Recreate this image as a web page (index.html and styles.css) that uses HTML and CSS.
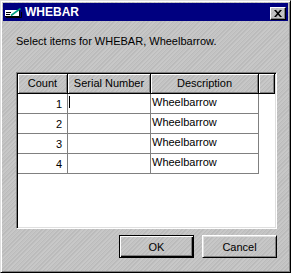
FILE: index.html
```html
<!DOCTYPE html>
<html>
<head>
<meta charset="utf-8">
<link rel="stylesheet" href="styles.css">
</head>
<body>
<div class="window">
  <div class="titlebar">
    <svg class="appicon" width="17" height="10" viewBox="0 0 17 10">
      <path d="M1 9.5h15.5V4" fill="none" stroke="#000"/>
      <path d="M0 2h14v7H0z" fill="#fff"/>
      <path d="M0 8.5h14.5V2" fill="none" stroke="#000"/>
      <path d="M1 4.5h5M1 6.5h4" stroke="#000"/>
      <path d="M6 7.5L15.5 0.5" stroke="#00a080" stroke-width="1.6"/>
    </svg>
    <span class="title">WHEBAR</span>
    <button class="close" type="button">
      <svg width="8" height="7" viewBox="0 0 8 7"><path d="M0 0h2l2 2.2L6 0h2L5 3.5 8 7H6L4 4.8 2 7H0l3-3.5z" fill="#000"/></svg>
    </button>
  </div>
  <div class="content">
    <p class="prompt">Select items for WHEBAR, Wheelbarrow.</p>
    <div class="grid">
      <div class="hdr">Count</div>
      <div class="hdr">Serial Number</div>
      <div class="hdr">Description</div>
      <div class="hdr"></div>

      <div class="cell num">1</div>
      <div class="cell"><span class="caret"></span></div>
      <div class="cell desc">Wheelbarrow</div>
      <div class="blank"></div>

      <div class="cell num">2</div>
      <div class="cell"></div>
      <div class="cell desc">Wheelbarrow</div>
      <div class="blank"></div>

      <div class="cell num">3</div>
      <div class="cell"></div>
      <div class="cell desc">Wheelbarrow</div>
      <div class="blank"></div>

      <div class="cell num">4</div>
      <div class="cell"></div>
      <div class="cell desc">Wheelbarrow</div>
      <div class="blank"></div>
    </div>
    <div class="buttons">
      <button class="btn default" type="button">OK</button>
      <button class="btn" type="button">Cancel</button>
    </div>
  </div>
</div>
</body>
</html>
```
FILE: styles.css
```css
html, body {
  margin: 0;
  padding: 0;
}
body {
  width: 291px;
  height: 273px;
  font-family: "Liberation Sans", Arial, sans-serif;
  font-size: 11px;
  color: #000;
  --hatch: repeating-linear-gradient(135deg, #c8c8c8 0 1px, #bbbbbb 1px 2px, #c3c3c3 2px 3px);
}
.window {
  box-sizing: border-box;
  width: 291px;
  height: 273px;
  border: 1px solid;
  border-color: #dfdfdf #000 #000 #dfdfdf;
  box-shadow: inset 1px 1px #fff, inset -1px -1px #808080;
  padding: 2px;
  background: var(--hatch);
  display: flex;
  flex-direction: column;
}
.titlebar {
  height: 18px;
  background: #000080;
  display: flex;
  align-items: flex-start;
  flex-shrink: 0;
}
.appicon {
  display: block;
  margin: 5px 0 0 2px;
}
.title {
  margin-left: 3px;
  color: #fff;
  font-weight: bold;
  font-size: 12px;
  line-height: 18px;
}
.close {
  margin: 4px 2px 0 auto;
  box-sizing: border-box;
  width: 16px;
  height: 13px;
  padding: 0;
  border: 1px solid;
  border-color: #fff #000 #000 #fff;
  box-shadow: inset -1px -1px #808080;
  background: var(--hatch);
  display: flex;
  align-items: center;
  justify-content: center;
}
.close svg {
  display: block;
}
.content {
  padding: 0 10px 0 13px;
  display: flex;
  flex-direction: column;
}
.prompt {
  margin: 14px 0 0 0;
  line-height: 13px;
}
.grid {
  margin-top: 24px;
  box-sizing: border-box;
  width: 261px;
  height: 157px;
  border: 1px solid;
  border-color: #808080 #fff #fff #808080;
  box-shadow: inset 1px 1px #000, inset -1px -1px #dfdfdf;
  padding: 1px;
  background: #fff;
  display: grid;
  grid-template-columns: 50px 83px 108px 1fr;
  grid-template-rows: 20px repeat(4, 20px);
  align-content: start;
}
.hdr {
  box-sizing: border-box;
  background: var(--hatch);
  border-right: 1px solid #000;
  border-bottom: 1px solid #000;
  box-shadow: inset 1px 1px #fff, inset -1px -1px #808080;
  text-align: center;
  line-height: 19px;
  white-space: nowrap;
  overflow: hidden;
}
.cell {
  box-sizing: border-box;
  border-right: 1px solid #808080;
  border-bottom: 1px solid #808080;
  background: #fff;
  line-height: 19px;
  white-space: nowrap;
}
.num {
  text-align: right;
  padding-right: 5px;
  padding-top: 1px;
}
.desc {
  padding-left: 1px;
  line-height: 16px;
}
.blank {
  background: #fff;
}
.caret {
  display: block;
  width: 1px;
  height: 12px;
  margin: 2px 0 0 1px;
  background: #000;
}
.buttons {
  margin-top: 6px;
  margin-right: 1px;
  display: flex;
  justify-content: flex-end;
  gap: 8px;
}
.btn {
  box-sizing: border-box;
  width: 75px;
  height: 23px;
  padding: 0;
  font-family: "Liberation Sans", Arial, sans-serif;
  font-size: 11px;
  color: #000;
  background: var(--hatch);
  border: 1px solid;
  border-color: #fff #000 #000 #fff;
  box-shadow: inset 1px 1px #dfdfdf, inset -1px -1px #808080;
}
.btn.default {
  border-color: #000;
  box-shadow: inset 1px 1px #fff, inset -1px -1px #000, inset -2px -2px #808080;
}
```
